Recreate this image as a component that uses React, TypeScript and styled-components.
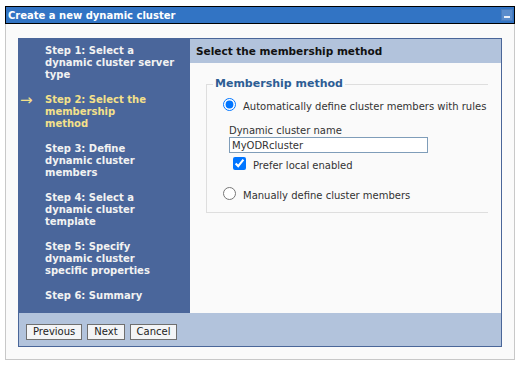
import styled, { createGlobalStyle } from "styled-components";

const GlobalStyle = createGlobalStyle`
  body {
    margin: 0;
    background: #ffffff;
    font-family: "DejaVu Sans", Verdana, sans-serif;
    font-size: 10px;
  }
`;

const Window = styled.div`
  width: 510px;
  margin: 6px 0 0 5px;
`;

const TitleBar = styled.div`
  height: 16px;
  border: 1px solid #000;
  background: #3274c4;
  display: flex;
  align-items: center;
  justify-content: space-between;
  padding: 0 1px 0 2px;
`;

const Title = styled.span`
  color: #fff;
  font-weight: bold;
  font-size: 10px;
`;

const MinButton = styled.span`
  width: 12px;
  height: 12px;
  box-sizing: border-box;
  background: #5a8ccc;
  border: 1px solid #4b7dbd;
  display: flex;
  align-items: flex-end;
  justify-content: center;
  padding-bottom: 2px;

  &::after {
    content: "";
    width: 6px;
    height: 2px;
    background: #e8eef8;
  }
`;

const Panel = styled.div`
  background: #fafafa;
  border: 1px solid #c8c8c8;
  border-top: none;
  padding: 14px 12px 12px;
`;

const Wizard = styled.div`
  border: 1px solid #4a6699;
  display: grid;
  grid-template-columns: 171px 1fr;
`;

const Nav = styled.div`
  background: #4a669b;
  padding: 6px 0 11px;
  display: flex;
  flex-direction: column;
  gap: 13px;
`;

const Step = styled.div<{ $active?: boolean }>`
  display: grid;
  grid-template-columns: 26px 1fr;
  font-weight: bold;
  line-height: 12px;
  color: ${(p) => (p.$active ? "#f4e08a" : "#f2f2f2")};
`;

const Arrow = styled.span`
  padding-left: 1px;
  font-size: 15px;
  font-weight: normal;
  line-height: 12px;
`;

const Line = styled.div`
  white-space: nowrap;
`;

const Content = styled.div`
  background: #fafafa;
`;

const Header = styled.div`
  height: 24px;
  background: #b2c3dc;
  display: flex;
  align-items: center;
  padding-left: 6px;
  font-weight: bold;
  font-size: 10.5px;
  color: #111;
`;

const Fieldset = styled.fieldset`
  margin: 13px 13px 0 16px;
  padding: 0 0 10px;
  border: 1px solid #dedede;
  border-right: none;
  min-width: 0;
`;

const Legend = styled.legend`
  margin-left: 6px;
  padding: 0 2px;
  font-weight: bold;
  font-size: 11px;
  line-height: 16px;
  color: #2d5d94;
`;

const Body = styled.div`
  padding: 6px 0 0 16px;
`;

const Option = styled.label<{ $gap?: number }>`
  display: flex;
  align-items: flex-start;
  margin-top: ${(p) => p.$gap ?? 0}px;
  color: #333;
  line-height: 13px;

  input {
    margin: 0;
    width: 13px;
    height: 13px;
    accent-color: #0075ff;
  }

  span {
    margin-left: 7px;
    padding-top: 2px;
  }
`;

const SubBlock = styled.div`
  margin-top: 11px;
  padding-left: 6px;
  color: #333;
  line-height: 13px;
`;

const NameInput = styled.input`
  display: block;
  box-sizing: border-box;
  width: 199px;
  height: 16px;
  margin: 0;
  padding: 0 2px;
  border: 1px solid #7f9db9;
  background: #fff;
  font-family: inherit;
  font-size: 10px;
  color: #333;
`;

const Check = styled(Option)`
  padding-left: 4px;
  margin-top: 4px;
`;

const ButtonBar = styled.div`
  grid-column: 1 / -1;
  height: 33px;
  box-sizing: border-box;
  background: #b2c3dc;
  padding: 11px 0 0 7px;
  display: flex;
  gap: 5px;
  align-items: flex-start;
`;

const Button = styled.button`
  height: 16px;
  padding: 0 6px;
  border: 1px solid #6f6f6f;
  background: #f3f4f6;
  font-family: inherit;
  font-size: 10px;
  color: #222;
  line-height: 14px;
`;

const steps = [
  ["Step 1: Select a", "dynamic cluster server", "type"],
  ["Step 2: Select the", "membership", "method"],
  ["Step 3: Define", "dynamic cluster", "members"],
  ["Step 4: Select a", "dynamic cluster", "template"],
  ["Step 5: Specify", "dynamic cluster", "specific properties"],
  ["Step 6: Summary"],
];

export default function App() {
  return (
    <>
      <GlobalStyle />
      <Window>
        <TitleBar>
          <Title>Create a new dynamic cluster</Title>
          <MinButton />
        </TitleBar>
        <Panel>
          <Wizard>
            <Nav>
              {steps.map((lines, i) => (
                <Step key={lines[0]} $active={i === 1}>
                  <Arrow>{i === 1 ? "→" : ""}</Arrow>
                  <div>
                    {lines.map((l) => (
                      <Line key={l}>{l}</Line>
                    ))}
                  </div>
                </Step>
              ))}
            </Nav>
            <Content>
              <Header>Select the membership method</Header>
              <Fieldset>
                <Legend>Membership method</Legend>
                <Body>
                  <Option>
                    <input type="radio" name="method" defaultChecked />
                    <span>Automatically define cluster members with rules</span>
                  </Option>
                  <SubBlock>
                    <div>Dynamic cluster name</div>
                    <NameInput defaultValue="MyODRcluster" />
                    <Check>
                      <input type="checkbox" defaultChecked />
                      <span>Prefer local enabled</span>
                    </Check>
                  </SubBlock>
                  <Option $gap={15}>
                    <input type="radio" name="method" />
                    <span>Manually define cluster members</span>
                  </Option>
                </Body>
              </Fieldset>
            </Content>
            <ButtonBar>
              <Button>Previous</Button>
              <Button>Next</Button>
              <Button>Cancel</Button>
            </ButtonBar>
          </Wizard>
        </Panel>
      </Window>
    </>
  );
}
